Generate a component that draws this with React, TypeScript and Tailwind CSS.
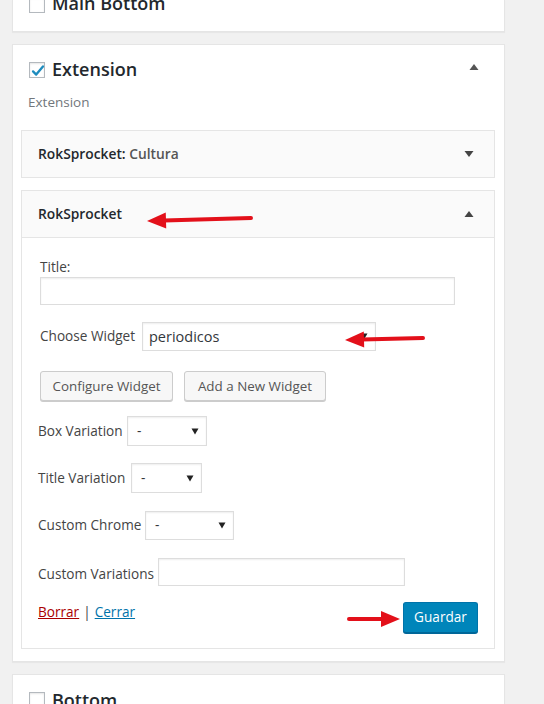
import React from 'react'

const font = { fontFamily: '"Open Sans", "Noto Sans", Arial, sans-serif' }

function Checkbox({ checked = false }: { checked?: boolean }) {
  return (
    <div className="relative w-[16px] h-[16px] shrink-0 border border-[#b4b9be] bg-white shadow-[inset_0_1px_2px_rgba(0,0,0,0.1)]">
      {checked && (
        <svg viewBox="0 0 20 20" className="absolute left-[-1px] top-[-1px] w-[18px] h-[18px]">
          <path d="M4.5 10.5 L8 14 L15.5 5" fill="none" stroke="#1e8cbe" strokeWidth="2.6" strokeLinecap="round" strokeLinejoin="round" />
        </svg>
      )}
    </div>
  )
}

function Triangle({ up, color = '#555' }: { up?: boolean; color?: string }) {
  return (
    <svg width="10" height="8" viewBox="0 0 10 8" className="shrink-0">
      {up ? <path d="M5 1 L9.5 7 L0.5 7 Z" fill={color} /> : <path d="M0.5 1 L9.5 1 L5 7 Z" fill={color} />}
    </svg>
  )
}

function FakeSelect({ width, value, big = false, height = 30 }: { width: number; value: string; big?: boolean; height?: number }) {
  return (
    <div
      className={`flex items-center justify-between border border-[#ddd] bg-white pr-[7px] shadow-[inset_0_1px_2px_rgba(0,0,0,0.07)] ${big ? 'pl-[6px]' : 'pl-[9px]'}`}
      style={{ width, height }}
    >
      <span className={big ? 'text-[14.5px] text-[#32373c]' : 'text-[13.6px] text-[#32373c]'}>{value}</span>
      <svg width="8" height="7" viewBox="0 0 8 7">
        <path d="M0.5 0.5 L7.5 0.5 L4 6.5 Z" fill="#222" />
      </svg>
    </div>
  )
}

function TextInput({ width, height = 28 }: { width: number; height?: number }) {
  return (
    <div
      className="border border-[#ddd] bg-white shadow-[inset_0_1px_2px_rgba(0,0,0,0.07)]"
      style={{ width, height }}
    />
  )
}

function Row({ label, labelWidth, children, top }: { label: string; labelWidth: number; children: React.ReactNode; top: string }) {
  return (
    <div className={`flex items-center ${top}`}>
      <span className="shrink-0 text-[13.6px] text-[#444]" style={{ width: labelWidth }}>{label}</span>
      {children}
    </div>
  )
}

function Arrow({ x1, y1, x2, y2 }: { x1: number; y1: number; x2: number; y2: number }) {
  // tail (x1,y1) -> tip (x2,y2)
  const dx = x2 - x1
  const dy = y2 - y1
  const len = Math.sqrt(dx * dx + dy * dy)
  const ux = dx / len
  const uy = dy / len
  const hl = 19
  const hw = 8
  const bx = x2 - ux * hl
  const by = y2 - uy * hl
  const p1 = `${bx - uy * hw},${by + ux * hw}`
  const p2 = `${bx + uy * hw},${by - ux * hw}`
  return (
    <g>
      <line x1={x1} y1={y1} x2={bx + ux * 2} y2={by + uy * 2} stroke="#e3101a" strokeWidth="4" strokeLinecap="round" />
      <polygon points={`${x2},${y2} ${p1} ${p2}`} fill="#e3101a" />
    </g>
  )
}

export default function App() {
  return (
    <div className="relative w-[544px] h-[704px] overflow-hidden bg-[#f1f1f1]" style={font}>
      <div className="pl-[12px] w-[505px]">
        {/* Main Bottom (cut off) */}
        <div className="overflow-hidden bg-white border-x border-b border-[#e5e5e5] shadow-[0_1px_1px_rgba(0,0,0,0.04)] pl-[16px] pb-[14px]">
          <div className="flex items-center gap-[7px] h-[24px] -mt-[7px]">
            <Checkbox />
            <span className="relative -top-[2px] text-[18px] font-semibold text-[#23282d]">Main Bottom</span>
          </div>
        </div>

        {/* Extension */}
        <div className="mt-[12px] bg-white border border-[#e5e5e5] shadow-[0_1px_1px_rgba(0,0,0,0.04)] pt-[13px] pb-[12px]">
          <div className="flex items-center h-[24px] pl-[16px] pr-[25px]">
            <Checkbox checked />
            <span className="relative -top-[1px] ml-[7px] text-[18px] font-semibold text-[#23282d]">Extension</span>
            <div className="ml-auto -mt-[6px]">
              <Triangle up />
            </div>
          </div>
          <div className="mt-[11px] pl-[15px] text-[13.5px] leading-[19px] text-[#72777c]">Extension</div>

          <div className="mt-[18px] ml-[8px] mr-[9px]">
            {/* widget collapsed */}
            <div className="h-[48px] flex items-center bg-[#fafafa] border border-[#e5e5e5] pl-[16px] pr-[20px]">
              <span className="text-[13.8px] font-semibold text-[#23282d]">
                RokSprocket:<span className="text-[#555]"> Cultura</span>
              </span>
              <div className="ml-auto">
                <Triangle color="#444" />
              </div>
            </div>

            {/* widget open */}
            <div className="mt-[12px] border border-[#e5e5e5] bg-white">
              <div className="h-[47px] flex items-center bg-[#fafafa] border-b border-[#e5e5e5] pl-[16px] pr-[20px]">
                <span className="text-[13.8px] font-semibold text-[#23282d]">RokSprocket</span>
                <div className="ml-auto">
                  <Triangle up color="#444" />
                </div>
              </div>

              <div className="pl-[16px] pr-[16px] pt-[19px] pb-[15px]">
                <div className="pl-[2px]">
                  <div className="text-[13.6px] leading-[20px] text-[#444]">Title:</div>
                  <TextInput width={415} />
                  <Row label="Choose Widget" labelWidth={102} top="mt-[17px]">
                    <FakeSelect width={234} height={29} value="periodicos" big />
                  </Row>
                  <div className="mt-[20px] flex gap-[11px]">
                    <button className="h-[30px] w-[133px] rounded-[3px] border border-[#ccc] bg-[#f7f7f7] text-[13.4px] text-[#555] shadow-[0_1px_0_#ccc]">
                      Configure Widget
                    </button>
                    <button className="h-[30px] w-[142px] rounded-[3px] border border-[#ccc] bg-[#f7f7f7] text-[13.4px] text-[#555] shadow-[0_1px_0_#ccc]">
                      Add a New Widget
                    </button>
                  </div>
                </div>

                <Row label="Box Variation" labelWidth={89} top="mt-[15px]">
                  <FakeSelect width={80} value="-" />
                </Row>
                <Row label="Title Variation" labelWidth={93} top="mt-[17px]">
                  <FakeSelect width={71} value="-" />
                </Row>
                <Row label="Custom Chrome" labelWidth={107} top="mt-[18px]">
                  <FakeSelect width={89} height={29} value="-" />
                </Row>
                <Row label="Custom Variations" labelWidth={120} top="mt-[18px] [&>span]:pt-[4px]">
                  <TextInput width={247} />
                </Row>

                <div className="mt-[16px] flex items-start">
                  <div className="text-[13.6px] leading-[20px] text-[#444]">
                    <a className="text-[#a00] underline">Borrar</a>
                    <span className="mx-[4px]">|</span>
                    <a className="text-[#0073aa] underline">Cerrar</a>
                  </div>
                  <button className="ml-auto h-[31px] w-[75px] rounded-[3px] border border-[#0073aa] border-b-[#006799] bg-[#0085ba] text-[13.6px] text-white shadow-[0_1px_0_#006799]">
                    Guardar
                  </button>
                </div>
              </div>
            </div>
          </div>
        </div>

        {/* Bottom */}
        <div className="mt-[12px] h-[60px] bg-white border border-[#e5e5e5] shadow-[0_1px_1px_rgba(0,0,0,0.04)] pt-[13px] pl-[16px]">
          <div className="flex items-center gap-[7px] h-[24px]">
            <Checkbox />
            <span className="text-[18px] font-semibold text-[#23282d]">Bottom</span>
          </div>
        </div>
      </div>

      {/* annotation arrows */}
      <svg className="absolute left-0 top-0 pointer-events-none" width="544" height="704">
        <Arrow x1={251} y1={218} x2={147} y2={221} />
        <Arrow x1={423} y1={338} x2={345} y2={340} />
        <Arrow x1={349} y1={619} x2={400} y2={619} />
      </svg>
    </div>
  )
}
